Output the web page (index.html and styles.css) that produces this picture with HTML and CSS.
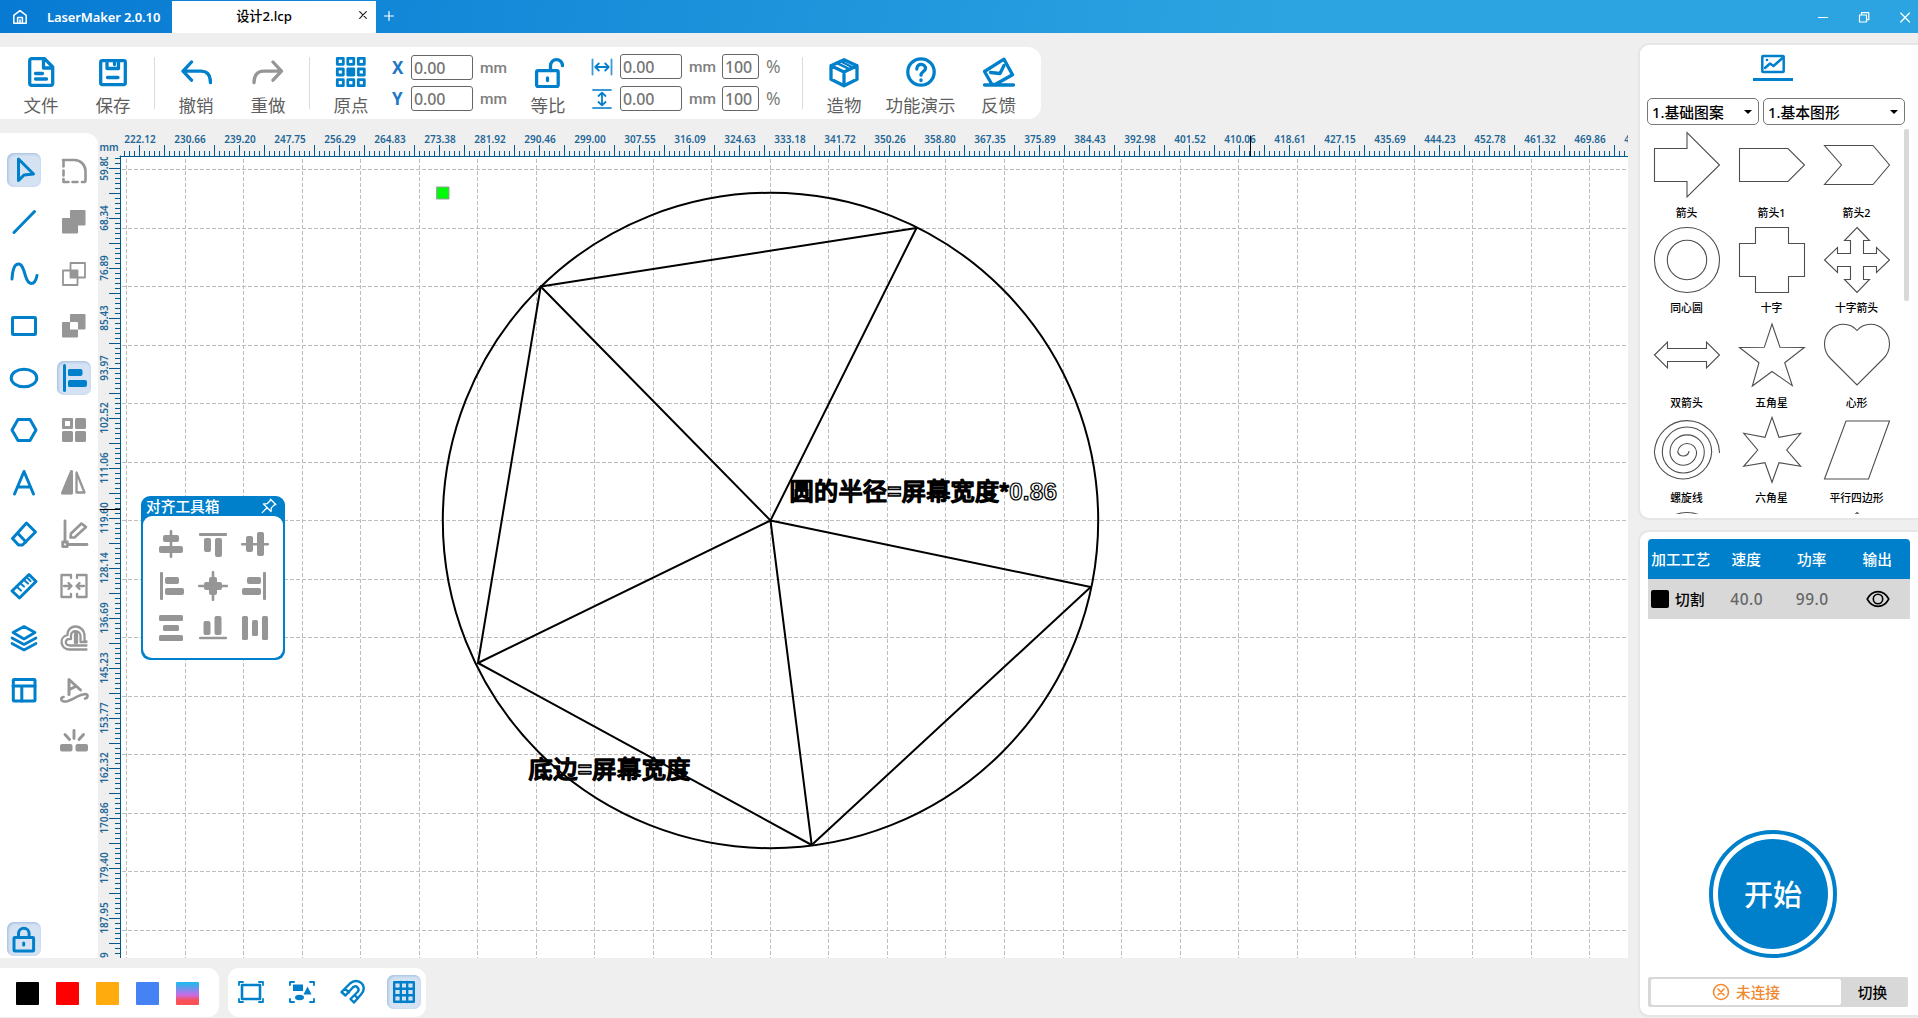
FILE: index.html
```html
<!DOCTYPE html>
<html lang="zh-CN">
<head>
<meta charset="utf-8">
<title>LaserMaker 2.0.10</title>
<link rel="stylesheet" href="styles.css">
</head>
<body>
<div class="app">
  <header class="titlebar">
    <svg class="home" viewBox="0 0 16 16"><path d="M1.8 14.2V6.4L8 1.6l6.200 4.800v7.800z"/><path d="M5.600 14V8.500h4.800V14M8 11v3"/></svg>
    <span class="brand">LaserMaker 2.0.10</span>
    <div class="tab"><span>设计2.lcp</span><svg class="tab-close" viewBox="0 0 8 8"><path d="M.7.7l6.600 6.600M7.300.7L.7 7.300"/></svg></div>
    <svg class="plus" viewBox="0 0 10 10"><path d="M5 .5v9M.5 5h9"/></svg>
    <div class="window-buttons">
      <svg viewBox="0 0 12 12"><path d="M1.500 6.500h9"/></svg>
      <svg viewBox="0 0 12 12"><path d="M1.500 4h7v7h-7zM3.500 4V1.700h7.300v7H8.500"/></svg>
      <svg viewBox="0 0 12 12"><path d="M1.700 2l8.800 9M10.500 2l-8.800 9"/></svg>
    </div>
  </header>

  <main class="work">
    <nav class="toolbar">
      <div class="item"><svg class="ico" viewBox="0 0 32 32"><path d="M19.500 2.700H6.700a2 2 0 0 0-2 2v22.600a2 2 0 0 0 2 2h19a2 2 0 0 0 2-2V11zM18.500 4v8h8"/><path d="M10.500 17.500h7M10.500 23h11"/></svg><span>文件</span></div>
      <div class="item"><svg class="ico" viewBox="0 0 32 32"><rect x="3.700" y="4.600" width="24.600" height="24" rx="1.500"/><path d="M10 5v7.500h11.500V5M10.500 21.500h10.500M17.500 6.500v2"/></svg><span>保存</span></div>
      <i class="sep"></i>
      <div class="item"><svg class="ico" viewBox="0 0 32 32"><path d="M11.500 6L3 15.200l8.500 9M3.500 15.200H21c6 0 9.500 4 9.500 11.500"/></svg><span>撤销</span></div>
      <div class="item"><svg class="ico muted" viewBox="0 0 32 32"><path d="M21 6l8.500 9.200-8.500 9M29 15.200H11.500c-6 0-9.500 4-9.500 11.500"/></svg><span>重做</span></div>
      <i class="sep"></i>
      <div class="item"><svg class="ico dots" viewBox="0 0 32 32"><rect x="2.300" y="2.300" width="6" height="6"/><rect x="12.800" y="2.300" width="6" height="6"/><rect x="23.300" y="2.300" width="6" height="6"/><rect x="2.300" y="13" width="6" height="6"/><rect x="12.800" y="13" width="6" height="6" fill="#0080cb"/><rect x="23.300" y="13" width="6" height="6"/><rect x="2.300" y="23.700" width="6" height="6"/><rect x="12.800" y="23.700" width="6" height="6"/><rect x="23.300" y="23.700" width="6" height="6"/></svg><span>原点</span></div>
      <div class="fields xy">
        <b>X</b><span class="field">0.00</span><em>mm</em>
        <b>Y</b><span class="field">0.00</span><em>mm</em>
      </div>
      <div class="item"><svg class="ico" viewBox="0 0 32 32"><rect x="4.600" y="14.600" width="21.600" height="16" rx="1.500"/><path d="M18.500 14.500V9.700a6 6 0 0 1 12 0"/><path d="M15.500 22v2.500"/></svg><span>等比</span></div>
      <div class="fields size">
        <svg class="dim" viewBox="0 0 22 20"><path class="bar" d="M1.500 2.500v15M20.500 2.500v15"/><path d="M4.500 10h13M7.800 6.500L4.300 10l3.500 3.500M14.200 6.500l3.500 3.500-3.500 3.500"/></svg><span class="field">0.00</span><em>mm</em><span class="field">100</span><em class="pct">%</em>
        <svg class="dim" viewBox="0 0 22 20"><path class="bar" d="M2 1h18M2 19h18"/><path d="M11 4v12M7.500 7L11 3.700 14.500 7M7.500 13l3.500 3.300 3.500-3.300"/></svg><span class="field">0.00</span><em>mm</em><span class="field">100</span><em class="pct">%</em>
      </div>
      <i class="sep"></i>
      <div class="item"><svg class="ico" viewBox="0 0 32 32"><path d="M16 3.700l13 6v13.600l-13 6.500-13-6.500V9.700zM3 9.700l13 6.300 13-6.300M16 16v13"/><path class="mid" d="M8.500 6.800l13.500 6.500M12 5l13 6.500"/></svg><span>造物</span></div>
      <div class="item wide"><svg class="ico" viewBox="0 0 32 32"><circle cx="16" cy="16" r="13.200"/><path d="M11.800 13c0-6.500 9.200-5.500 8.600-.3-.3 2.800-4.400 3.100-4.400 6.500"/><path d="M16 23.800v.7"/></svg><span>功能演示</span></div>
      <div class="item last"><svg class="ico" viewBox="0 0 32 32"><path d="M1.500 29h29M1.500 15.500L21 3.200l8.500 15.600-17.300 9.700H9z"/><path d="M7.500 16.500l9.500 1 4-8"/></svg><span>反馈</span></div>
    </nav>

    <section class="stage">
      <aside class="tools">
        <div class="toolgrid">
          <span class="tool on"><svg viewBox="0 0 30 30"><path d="M9.500 4v21.500l5.500-5.500 9.500-1z"/></svg></span>
          <span class="tool g"><svg viewBox="0 0 30 30"><path d="M4 5h11.500a11 11 0 0 1 11 11v10M26 27h-3M18.500 27h-5M9.500 27H4.500v-3M4.500 20.500v-5M4.500 11.500V5" stroke-width="2.600"/></svg></span>
          <span class="tool"><svg viewBox="0 0 30 30"><path d="M5 25.500L25.500 4.500"/></svg></span>
          <span class="tool g"><svg class="solid" viewBox="0 0 30 30"><path d="M12 3h13.500q1 0 1 1v13.500q0 1-1 1h-6.500v7q0 1-1 1H4q-1 0-1-1V12q0-1 1-1h7V4q0-1 1-1z"/></svg></span>
          <span class="tool"><svg viewBox="0 0 30 30"><path d="M3 20C3.500 11 5.500 5 9.500 5S15 12 16.500 17s3 7.500 6 7.500 4.500-3 5.500-8"/></svg></span>
          <span class="tool g"><svg viewBox="0 0 30 30"><path d="M11.500 4H26v14.500H11.500zM4 11.500h14.500V26H4z" stroke-width="1.800"/><path d="M11 11h8v8h-8z" fill="#969696" stroke="none"/></svg></span>
          <span class="tool"><svg viewBox="0 0 30 30"><rect x="3.500" y="6.500" width="23" height="17" rx=".8"/></svg></span>
          <span class="tool g"><svg class="solid" viewBox="0 0 30 30"><path fill-rule="evenodd" d="M12 3h13.500q1 0 1 1v13.500q0 1-1 1h-6.500v7q0 1-1 1H4q-1 0-1-1V12q0-1 1-1h7V4q0-1 1-1zM12 11q-1 0-1 1v6.500h8V12q0-1-1-1z"/></svg></span>
          <span class="tool"><svg viewBox="0 0 30 30"><ellipse cx="15" cy="15" rx="12.800" ry="8.800"/></svg></span>
          <span class="tool g on"><svg viewBox="0 0 30 30"><path d="M5.500 2.500v25" stroke="#0080cb"/><path d="M10.500 6h11q2 0 2 2v3q0 2-2 2h-11q-1.500 0-1.500-1.500v-4Q9 6 10.500 6zM10.500 17H26q2 0 2 2v3q0 2-2 2H10.500Q9 24 9 22.500v-4Q9 17 10.500 17z" fill="#0080cb" stroke="none"/></svg></span>
          <span class="tool"><svg viewBox="0 0 30 30"><path d="M9 4.500h12l6 10.500-6 10.500H9L3 15z"/></svg></span>
          <span class="tool g"><svg class="solid" viewBox="0 0 30 30"><path fill-rule="evenodd" d="M4 3h9q1 0 1 1v9q0 1-1 1H4q-1 0-1-1V4q0-1 1-1zM6 6v5h5V6z"/><rect x="16" y="3" width="11" height="11" rx="1.500"/><rect x="3" y="16" width="11" height="11" rx="1.500"/><rect x="16" y="16" width="11" height="11" rx="1.500"/></svg></span>
          <span class="tool"><svg viewBox="0 0 30 30"><path d="M5.500 27L15 4.500 24.500 27M9 20h12"/></svg></span>
          <span class="tool g"><svg viewBox="0 0 30 30"><path d="M12.500 4.500V26H3.500zM17.500 5.500V25.500h8z" stroke-width="2.300"/><path d="M12.500 4.500V26H3.500z" fill="#969696"/></svg></span>
          <span class="tool"><svg viewBox="0 0 30 30"><path d="M17.500 4l9 9-13 13H9.500l-6-6.500zM8.500 14l8.500 9"/></svg></span>
          <span class="tool g"><svg viewBox="0 0 30 30"><path d="M6 2v20M10 25.500h18M3.700 23h4.600v4.600H3.700z" stroke-width="2.800"/><path d="M22.500 4.500l4.500 3.500-11.500 10.500h-4l.5-4z" stroke-width="2.600"/></svg></span>
          <span class="tool"><svg viewBox="0 0 30 30"><path d="M20 3.500l7 7-16.500 16.500-7.500-7z" /><path d="M7.500 15.500l4.500 4M11 12l4 3.500M14.500 8.500l4.500 4M17.500 6l4 4" stroke-width="2"/></svg></span>
          <span class="tool g"><svg viewBox="0 0 30 30"><path d="M12 7V4H2.500v22H12v-3M18 7V4h9.500v22H18v-3M5 15h7M9.500 12l3 3-3 3M25 15h-7M20.500 12l-3 3 3 3" stroke-width="2.300"/></svg></span>
          <span class="tool"><svg viewBox="0 0 30 30"><path d="M15 3.500L26 9.500 15 16 4 9.500zM3 15l12 6.500L27 15M3 20.500L15 27l12-6.500" stroke-width="2.700"/></svg></span>
          <span class="tool g"><svg viewBox="0 0 30 30"><path d="M27.500 26.500H11C1 26.500-.5 14 8.500 12c0-12 17-11 17 1v5.500h2M27.500 22.500H11c-6 0-5.500-7 1-6.500V12.500c0-6 9.500-5.500 9.500.5v6h6M16 20v-8.500c0-2 2-2 2 0V20" stroke-width="2.300"/></svg></span>
          <span class="tool"><svg viewBox="0 0 30 30"><rect x="4.300" y="4.500" width="21.700" height="21.500" rx=".8"/><path d="M4 11h22M12.800 11v15"/></svg></span>
          <span class="tool g"><svg viewBox="0 0 30 30"><path d="M10 19.500V4.500L21.500 15M10.500 14.500l6-3" stroke-width="3"/><path d="M4.500 22c-3 .5-3 4 .5 4.500 7 .5 12-6.500 21.500-7.500 3 .5 2.500 4-.5 4.500" stroke-width="2.600"/></svg></span>
          <span class="tool"></span>
          <span class="tool g"><svg viewBox="0 0 30 30"><path d="M15 3.500v8M6 7.500l4.500 5M24.500 7.500l-4.500 5" stroke-width="2.900"/><path d="M3 17h8.500q2 0 2 2v3.500q0 2-2 2H3q-2 0-2-2V19q0-2 2-2zM18.500 17H27q2 0 2 2v3.500q0 2-2 2h-8.500q-2 0-2-2V19q0-2 2-2z" fill="#969696" stroke="none"/></svg></span>
        </div>
        <span class="tool on lock"><svg viewBox="0 0 30 30"><rect x="5" y="13.500" width="19.600" height="13.500" rx=".8"/><path d="M9.500 13V9.500a5.300 5.300 0 0 1 10.600 0V13M14.700 19v2"/></svg></span>
      </aside>

      <svg class="canvas" viewBox="98 133 1530 825">
        <rect x="121" y="157" width="1507" height="801" fill="#fff"/>
        <g id="grid"></g>
        <g class="drawing">
          <circle cx="770.500" cy="520.500" r="327.700"/>
          <path d="M916.500 228L540.700 286.500 478 663l333.700 182L1090.700 587"/>
          <path d="M770.500 520.500L916.500 228M770.500 520.500L540.700 286.500M770.500 520.500L478 663M770.500 520.500L811.700 845M770.500 520.500L1090.700 587"/>
          <text x="789.500" y="500.300" textLength="267.500">圆的半径<tspan class="equals">=</tspan>屏幕宽度*<tspan class="hollow">0.86</tspan></text>
          <text x="528.500" y="778.300" textLength="162">底边<tspan class="equals">=</tspan>屏幕宽度</text>
        </g>
        <rect x="437" y="187" width="12" height="12" fill="#00fb08" stroke="#999"/>
        <g id="rulers"></g>
        <rect x="98" y="133" width="22" height="24" fill="#efefef"/>
        <text class="unit" x="99.500" y="151">mm</text>
        <path d="M120.500 156v802M120 156.500h1508" stroke="#005a8e"/>
        <path d="M1250.500 136v20M100 509.500h20" stroke="#000"/>
      </svg>

      <div class="alignbox">
        <div class="alignhead"><span>对齐工具箱</span><svg viewBox="0 0 16 16"><path d="M9.500 1.200l5.300 5.300-1.500.4-3 3-.3 3.600L2.500 6l3.600-.3 3-3zM6 9.800l-4.800 4.800"/></svg></div>
        <div class="aligngrid">
          <svg viewBox="0 0 42 42"><rect x="19.700" y="7" width="2.600" height="28" rx="1"/><rect x="13" y="12" width="16" height="7" rx="2"/><rect x="9" y="23" width="24" height="7" rx="2"/></svg>
          <svg viewBox="0 0 42 42"><rect x="7" y="10" width="28" height="3" rx="1"/><rect x="12" y="15" width="7" height="14" rx="2"/><rect x="23" y="15" width="7" height="19" rx="2"/></svg>
          <svg viewBox="0 0 42 42"><rect x="7" y="20" width="28" height="2.600" rx="1"/><rect x="12" y="13" width="7" height="16" rx="2"/><rect x="23" y="9" width="7" height="24" rx="2"/></svg>
          <svg viewBox="0 0 42 42"><rect x="10" y="7" width="3" height="28" rx="1"/><rect x="15" y="12" width="14" height="7" rx="2"/><rect x="15" y="23" width="19" height="7" rx="2"/></svg>
          <svg viewBox="0 0 42 42"><rect x="19.700" y="6" width="2.600" height="30" rx="1"/><rect x="6" y="19.700" width="30" height="2.600" rx="1"/><rect x="12" y="17" width="18" height="8" rx="2"/><rect x="17" y="12" width="8" height="18" rx="2"/></svg>
          <svg viewBox="0 0 42 42"><rect x="29" y="7" width="3" height="28" rx="1"/><rect x="13" y="12" width="14" height="7" rx="2"/><rect x="8" y="23" width="19" height="7" rx="2"/></svg>
          <svg viewBox="0 0 42 42"><rect x="9" y="8" width="24" height="6" rx="1.500"/><rect x="13" y="18" width="16" height="6" rx="1.500"/><rect x="9" y="28" width="24" height="6" rx="1.500"/></svg>
          <svg viewBox="0 0 42 42"><rect x="7" y="29.700" width="28" height="2.600" rx="1"/><rect x="11.500" y="14" width="7" height="14" rx="2"/><rect x="22.500" y="9" width="7" height="19" rx="2"/></svg>
          <svg viewBox="0 0 42 42"><rect x="8" y="9" width="6" height="24" rx="1.500"/><rect x="18" y="13" width="6" height="16" rx="1.500"/><rect x="28" y="9" width="6" height="24" rx="1.500"/></svg>
        </div>
      </div>
    </section>

    <footer class="bottom">
      <div class="swatches"><i class="black"></i><i class="red"></i><i class="orange"></i><i class="blue"></i><i class="multi"></i></div>
      <div class="viewtools">
        <span class="tool"><svg viewBox="0 0 30 30"><rect x="6" y="8" width="18" height="14" stroke-width="2.600"/><path d="M3 8V5h4M23 5h4v3M27 22v3h-4M7 25H3v-3" stroke-width="1.800"/></svg></span>
        <span class="tool"><svg viewBox="0 0 30 30"><path d="M3 8V5h4M23 5h4v3M27 22v3h-4M7 25H3v-3" stroke-width="1.900"/><path d="M6 7.500h10v6.500H6zM20.500 9.500l4 8h-8z" fill="#0080cb" stroke="none"/><ellipse cx="12.500" cy="20.500" rx="4.500" ry="2.800" fill="#0080cb" stroke="none"/></svg></span>
        <span class="tool"><svg viewBox="0 0 30 30"><path d="M3.500 15L12 6.500c8-7.500 19 3 11 11L16 25.500l-3.500-3.500 7-7c3-3.500-1.500-7.500-4.700-4.500L7.500 18.500zM7 11.500l4 4M16.500 18l3.500 3.500" stroke-width="2.400"/></svg></span>
        <span class="tool on"><svg viewBox="0 0 30 30"><path d="M5.200 5.200h19.600v19.600H5.200zM11.800 5v20M18.200 5v20M5 11.800h20M5 18.200h20" stroke-width="2.400"/></svg></span>
      </div>
    </footer>
  </main>

  <aside class="side">
    <section class="library">
      <div class="libtab"><svg viewBox="0 0 24 20"><rect x="1.300" y="2" width="21.400" height="16" rx=".8"/><path d="M4 14l5-4.500 3.500 2.500L21.500 4"/><circle cx="6" cy="6" r="1.300" fill="#0080cb" stroke="none"/></svg></div>
      <div class="selects"><div class="select">1.基础图案</div><div class="select">1.基本图形</div></div>
      <div class="shapes">
        <figure><svg viewBox="0 0 66 66"><path d="M.5 16.500H33V.5L65.500 33 33 65V49.500H.5z"/></svg><figcaption>箭头</figcaption></figure>
        <figure><svg viewBox="0 0 66 66"><path d="M.5 16.500H49L65.500 33 49 49.500H.5z"/></svg><figcaption>箭头1</figcaption></figure>
        <figure><svg viewBox="0 0 66 66"><path d="M.5 13.500H49L65.500 33 49 52.500H.5L17.500 33z"/></svg><figcaption>箭头2</figcaption></figure>
        <figure><svg viewBox="0 0 66 66"><circle cx="33" cy="33" r="32.500"/><circle cx="33" cy="33" r="19.700"/></svg><figcaption>同心圆</figcaption></figure>
        <figure><svg viewBox="0 0 66 66"><path d="M16.500.5h33v16h16v33h-16v16h-33v-16H.5v-33h16z"/></svg><figcaption>十字</figcaption></figure>
        <figure><svg viewBox="0 0 66 66"><path d="M33 .5L45.500 13.500H39.500V26.500H52.500V20.500L65.500 33 52.500 45.500V39.500H39.500V52.500H45.500L33 65.500 20.500 52.500H26.500V39.500H13.500V45.500L.5 33 13.500 20.500V26.500H26.500V13.500H20.500z"/></svg><figcaption>十字箭头</figcaption></figure>
        <figure><svg viewBox="0 0 66 66"><path d="M.5 33L13.500 20V26.500H52.500V20L65.500 33 52.500 46V39.500H13.500V46z"/></svg><figcaption>双箭头</figcaption></figure>
        <figure><svg viewBox="0 0 66 66"><path d="M33 2l8 23.300 24.300.2-19.600 15.200 7.600 23L33 49.500 13.300 64 20 40.700.5 25.500l24.800-.2z"/></svg><figcaption>五角星</figcaption></figure>
        <figure><svg viewBox="0 0 66 66"><path d="M33 8.500C29 4 24 2.300 19.500 2.300 9 2.300.5 11 .5 22c0 6 2.500 11 6 14.500L33 63l26.500-26.500c3.500-3.500 6-8.500 6-14.500 0-11-8.500-19.700-19-19.700C42 2.300 37 4 33 8.500z"/></svg><figcaption>心形</figcaption></figure>
        <figure><svg viewBox="0 0 66 66"><path d="M65.500 35.500A32.600 33.500 0 0 0 .4 35 28.700 28.700 0 0 0 57.700 35 24.700 25 0 0 0 8.300 35 21 21 0 0 0 50.300 35 17.100 17.100 0 0 0 16 35 13.300 13.300 0 0 0 42.600 35 9.500 9.500 0 0 0 23.700 35 5.900 5.900 0 0 0 35 34.500"/></svg><figcaption>螺旋线</figcaption></figure>
        <figure><svg viewBox="0 0 66 66"><path d="M33 .3l7 20 21.700-4L47.700 33l14 16.300-21.700-3.600-7 19.600-7-19.600-21.300 3.600L18.700 33l-14-16.700 21.300 4z"/></svg><figcaption>六角星</figcaption></figure>
        <figure><svg viewBox="0 0 66 66"><path d="M22 4h43.500l-21 58H.5z"/></svg><figcaption>平行四边形</figcaption></figure>
        <figure><svg viewBox="0 0 66 66"><circle cx="33" cy="33" r="32.500"/></svg></figure>
        <figure></figure>
        <figure><svg viewBox="0 0 66 66"><path d="M33 .5L65.500 33 33 65.500.5 33z"/></svg></figure>
      </div>
      <i class="thumb"></i>
    </section>

    <section class="process">
      <div class="thead"><span>加工工艺</span><span>速度</span><span>功率</span><span>输出</span></div>
      <div class="trow">
        <span class="name"><i></i><span>切割</span></span><span>40.0</span><span>99.0</span>
        <span><svg viewBox="0 0 24 18"><path d="M1.200 9C6.500-.8 17.500-.8 22.800 9 17.500 18.800 6.500 18.800 1.200 9z"/><circle cx="12" cy="9" r="4.700"/></svg></span>
      </div>
      <button class="start"><span>开始</span></button>
      <div class="connect">
        <div class="status"><svg viewBox="0 0 18 18"><circle cx="9" cy="9" r="7.500"/><path d="M6 6l6 6M12 6l-6 6"/></svg><span>未连接</span></div>
        <div class="switch">切换</div>
      </div>
    </section>
  </aside>
</div>
<script src="script.js"></script>
</body>
</html>
```
FILE: styles.css
```css
* { box-sizing: border-box; }
body {
  margin: 0;
  width: 1918px;
  height: 1018px;
  overflow: hidden;
  background: #efefef;
  font-family: "Noto Sans", "Noto Sans CJK SC", sans-serif;
}
svg { display: block; fill: none; stroke-linejoin: round; stroke-linecap: round; }
i, em { font-style: normal; display: block; }

.app { display: grid; grid-template: 33px 985px / 1638px 280px; }

/* title bar */
.titlebar {
  grid-column: 1 / 3;
  display: flex;
  align-items: center;
  background: linear-gradient(100deg, #077ad3 0%, #2ca4e1 67%, #2ca4e1 100%);
  color: #fff;
  font: 500 13px "Noto Sans", "Noto Sans CJK SC", sans-serif;
}
.home { width: 16px; height: 16px; margin-left: 12px; stroke: #fff; stroke-width: 1.500; }
.brand { width: 125px; margin-left: 19px; white-space: nowrap; font-weight: 600; font-size: 13px; letter-spacing: -.12px; }
.tab {
  display: flex;
  align-items: center;
  width: 204px;
  height: 32px;
  margin-top: 1px;
  background: #fff;
  color: #000;
}
.tab span { width: 184px; height: 20px; margin-top: -2px; text-align: center; font-size: 13.200px; }
.tab-close { width: 8px; height: 8px; margin: -5px 0 0 3px; stroke: #222; stroke-width: 1.200; }
.plus { width: 10px; height: 10px; margin: -2px 0 0 8px; stroke: #fff; stroke-width: 1.200; }
.window-buttons { display: flex; gap: 29px; margin-left: auto; padding-right: 7px; }
.window-buttons svg { width: 12px; height: 12px; stroke: #fff; stroke-width: 1.200; }

/* top toolbar */
.work { display: flex; flex-direction: column; }
.toolbar {
  display: flex;
  width: 1041px;
  height: 72px;
  margin-top: 14px;
  padding-left: 5px;
  background: #fff;
  border-radius: 0 13px 13px 0;
}
.item { width: 72px; padding-top: 9px; display: flex; flex-direction: column; align-items: center; color: #5f5f5f; }
.item.wide { width: 81px; }
.item.last { width: 75px; }
.item span { margin-top: 4px; font: 17.500px/26px "Noto Sans CJK SC", sans-serif; white-space: nowrap; }
.ico { width: 32px; height: 32px; stroke: #0080cb; stroke-width: 3.300; }
.ico.muted { stroke: #969696; }
.ico .mid { stroke-width: 2.500; }
.dots { stroke-width: 2.800; }
.sep { flex: none; width: 1px; height: 52px; margin: 10px 5px 0; background: #dcdcdc; }
.fields { display: grid; grid-auto-rows: 25px; align-items: center; color: #757575; padding-top: 8px; row-gap: 6px; align-content: start; }
.xy { grid-template-columns: 24px 62px 39px; width: 125px; }
.size { grid-template-columns: 36px 62px 40px 37px 38px; width: 213px; padding-top: 7px; row-gap: 7px; }
.fields b { color: #1d78c8; font-size: 17px; line-height: 25px; padding-left: 5px; }
.fields em { font: 500 15.500px/25px Roboto, sans-serif; padding: 2px 0 0 7px; color: #808080; }
.fields .pct { font: 17.500px/25px "Noto Sans", sans-serif; padding-top: 0; }
.field { height: 25px; border: 1px solid #666; border-radius: 3px; padding-left: 2px; font-size: 16px; font-weight: 500; line-height: 24px; letter-spacing: -.1px; }
.dim { width: 22px; height: 20px; margin-left: 7px; stroke: #0080cb; stroke-width: 1.800; }
.dim .bar { stroke: #3b9ad6; }

/* tool column and canvas */
.stage { position: relative; display: flex; height: 825px; margin-top: 14px; }
.tools { width: 98px; background: #fff; border-radius: 0 12px 0 0; padding: 20px 7px 2px; display: flex; flex-direction: column; justify-content: space-between; }
.toolgrid { display: grid; grid-template-columns: 34px 34px; gap: 18px 16px; }
.tool { width: 34px; height: 34px; border-radius: 7px; padding: 2px; }
.tool svg { width: 30px; height: 30px; stroke: #0080cb; stroke-width: 3; }
.tool.g svg { stroke: #969696; }
.tool svg.solid { fill: #969696; stroke: none; }
.tool.on { background: #d5e2f3; box-shadow: inset 1px 1px 3px #9dbbdf; }
.canvas { width: 1530px; height: 825px; }
.drawing { stroke: #000; stroke-width: 2; }
.drawing text { font: 24.200px "Liberation Sans", "Noto Sans CJK SC", sans-serif; stroke-width: 1.700; fill: #333; }
.drawing .equals { font-weight: bold; stroke-width: 1.400; fill: #999; }
.drawing .hollow { font-weight: bold; stroke-width: 1.200; fill: #fff; }
#rulers text, .unit { font: 600 10px "Noto Sans", sans-serif; fill: #1f6796; stroke: none; }

/* floating alignment box */
.alignbox {
  position: absolute;
  left: 141px;
  top: 363px;
  width: 144px;
  height: 164px;
  background: #0080cb;
  border-radius: 9px;
  padding: 0 2px 2px;
}
.alignhead { display: flex; justify-content: space-between; align-items: center; height: 20px; padding: 0 6px 0 3px; color: #fff; font: 500 14.700px/20px "Noto Sans CJK SC", sans-serif; }
.alignhead svg { width: 16px; height: 16px; stroke: #fff; stroke-width: 1.300; }
.aligngrid { display: grid; grid-template-columns: repeat(3, 42px); grid-auto-rows: 42px; height: 142px; padding: 7px; background: #fff; border-radius: 9px; }
.aligngrid svg { fill: #969696; width: 42px; height: 42px; }

/* bottom bar */
.bottom { display: flex; gap: 9px; margin-top: 10px; height: 49px; }
.bottom > div { display: flex; background: #fff; }
.swatches { width: 219px; gap: 17px; padding: 14px 16px; border-radius: 0 11px 11px 0; }
.swatches i { width: 23px; height: 23px; border-radius: 1px; }
.black { background: #000; }
.red { background: #f00; }
.orange { background: #ffab0e; }
.blue { background: #4583f5; }
.multi { background: linear-gradient(#22b8ed 5%, #c76be9 55%, #fa5058 80%); }
.viewtools { width: 198px; padding: 7px 6px; gap: 17px; border-radius: 11px; }

/* right column */
.side { display: flex; flex-direction: column; gap: 10px; padding-top: 10px; }
.side > section { background: #fff; border: 2px solid #e6e6e6; border-right: 0; border-radius: 11px 0 0 11px; }
.library { position: relative; height: 477px; padding-top: 9px; }
.libtab { width: 40px; height: 27px; margin-left: 113px; padding-left: 8px; border-bottom: 3px solid #0080cb; }
.libtab svg { width: 24px; height: 20px; stroke: #0080cb; stroke-width: 2.500; }
.selects { display: grid; grid-template-columns: 112px 142px; gap: 4px; margin: 17px 0 0 7px; }
.select { display: flex; align-items: center; justify-content: space-between; height: 27px; border: 1px solid #777; border-radius: 5px; padding: 0 6px 1px 4px; color: #000; font: 500 14.800px "Noto Sans", "Noto Sans CJK SC", sans-serif; }
.select::after { content: ""; border: 4px solid transparent; border-top-color: #000; border-bottom: 0; margin-top: 2px; }
.shapes { display: grid; grid-template-columns: repeat(3, 85px); grid-auto-rows: 95px; height: 385px; margin: 4px 0 0 4px; padding-top: 3px; overflow: hidden; }
.shapes figure { margin: 0; display: flex; flex-direction: column; align-items: center; }
.shapes svg { width: 66px; height: 66px; flex: none; stroke: #4c504c; stroke-width: 1.100; overflow: visible; stroke-linejoin: miter; }
.shapes figcaption { font: 500 10.800px/16px "Noto Sans", "Noto Sans CJK SC", sans-serif; margin-top: 7px; white-space: nowrap; }
.thumb { position: absolute; right: 9px; top: 84px; width: 5px; height: 172px; border-radius: 2px; background: #d8d8d8; }

.process { height: 487px; padding: 7px 0 0 8px; }
.thead, .trow { display: grid; grid-template-columns: repeat(4, 65.500px); width: 262px; height: 40px; align-items: center; text-align: center; font: 500 15px "Noto Sans", "Noto Sans CJK SC", sans-serif; }
.thead { background: #0080cb; color: #fff; border-radius: 4px 4px 0 0; padding-bottom: 2px; font-size: 14.700px; }
.trow { background: #d8d8d8; color: #666; }
.trow > span { font-size: 15.500px; letter-spacing: .5px; padding-left: 1px; }
.trow > .name { display: flex; align-items: center; gap: 6px; padding-left: 3px; color: #000; font-size: 14.700px; letter-spacing: 0; }
.name span { padding-bottom: 1px; }
.name i { width: 18px; height: 18px; border-radius: 2px; background: #000; }
.trow svg { width: 24px; height: 18px; margin: auto; stroke: #000; stroke-width: 1.600; }
.start { display: block; width: 128px; height: 128px; margin: 211px 0 0 61px; padding: 5px; border: 4px solid #0080cb; border-radius: 50%; background: #fff; }
.start span { display: grid; place-items: center; height: 110px; padding-bottom: 2px; border-radius: 50%; background: #0080cb; color: #fff; font: 500 29px "Noto Sans CJK SC", sans-serif; }
.connect { display: grid; grid-template-columns: 190px 1fr; width: 260px; height: 30px; margin-top: 19px; padding: 2px 3px; padding-right: 0; background: #d8d8d8; border-radius: 2px; font: 500 14.700px "Noto Sans CJK SC", sans-serif; }
.status { display: flex; align-items: center; justify-content: center; gap: 6px; height: 26px; background: #fff; border-radius: 2px; color: #f08830; }
.status span { padding-bottom: 1px; }
.status svg { width: 18px; height: 18px; margin-top: -1px; stroke: #f58a2f; stroke-width: 1.600; }
.switch { display: grid; place-items: center; padding: 0 4px 1px 0; }
```
FILE: script.js
```js
const NS = "http://www.w3.org/2000/svg";

function add(parent, tag, attrs, text) {
  const el = document.createElementNS(NS, tag);
  for (const key in attrs) el.setAttribute(key, attrs[key]);
  if (text) el.textContent = text;
  parent.appendChild(el);
}

// Dashed grid, one line per 10 mm
const PITCH = 58.525;
let lines = "";
for (let n = 0; n < 26; n++) {
  lines += `M${Math.floor(126.6 + PITCH * n) + 0.5} 159V958`;
}
for (let n = 0; n < 14; n++) {
  lines += `M122 ${Math.floor(169.6 + PITCH * n) + 0.5}H1626`;
}
add(document.getElementById("grid"), "path", {
  d: lines, stroke: "#bdbdbd", "stroke-dasharray": "4 2", "stroke-linecap": "butt"
});

// Rulers: minor tick every 5px, major every 25px, label every 50px
const rulers = document.getElementById("rulers");
let ticks = "";
for (let x = 124; x < 1628; x += 5) {
  ticks += `M${x + 0.5} ${(x - 139) % 25 === 0 ? 145 : 151}V156`;
}
for (let y = 158; y < 958; y += 5) {
  ticks += `M${(y - 168) % 25 === 0 ? 109 : 115} ${y + 0.5}H120`;
}
add(rulers, "path", { d: ticks, stroke: "#005a8e", "stroke-linecap": "butt" });

const acrossLabels = "222.12 230.66 239.20 247.75 256.29 264.83 273.38 281.92 290.46 299.00 307.55 316.09 324.63 333.18 341.72 350.26 358.80 367.35 375.89 384.43 392.98 401.52 410.06 418.61 427.15 435.69 444.23 452.78 461.32 469.86 478.40";
const downLabels = "59.80 68.34 76.89 85.43 93.97 102.52 111.06 119.60 128.14 136.69 145.23 153.77 162.32 170.86 179.40 187.95 196.49";

acrossLabels.split(" ").forEach((label, i) => {
  add(rulers, "text", { x: 140 + 50 * i, y: 143, "text-anchor": "middle" }, label);
});
downLabels.split(" ").forEach((label, i) => {
  add(rulers, "text", { "text-anchor": "middle", transform: `translate(108 ${168 + 50 * i}) rotate(-90)` }, label);
});
```
